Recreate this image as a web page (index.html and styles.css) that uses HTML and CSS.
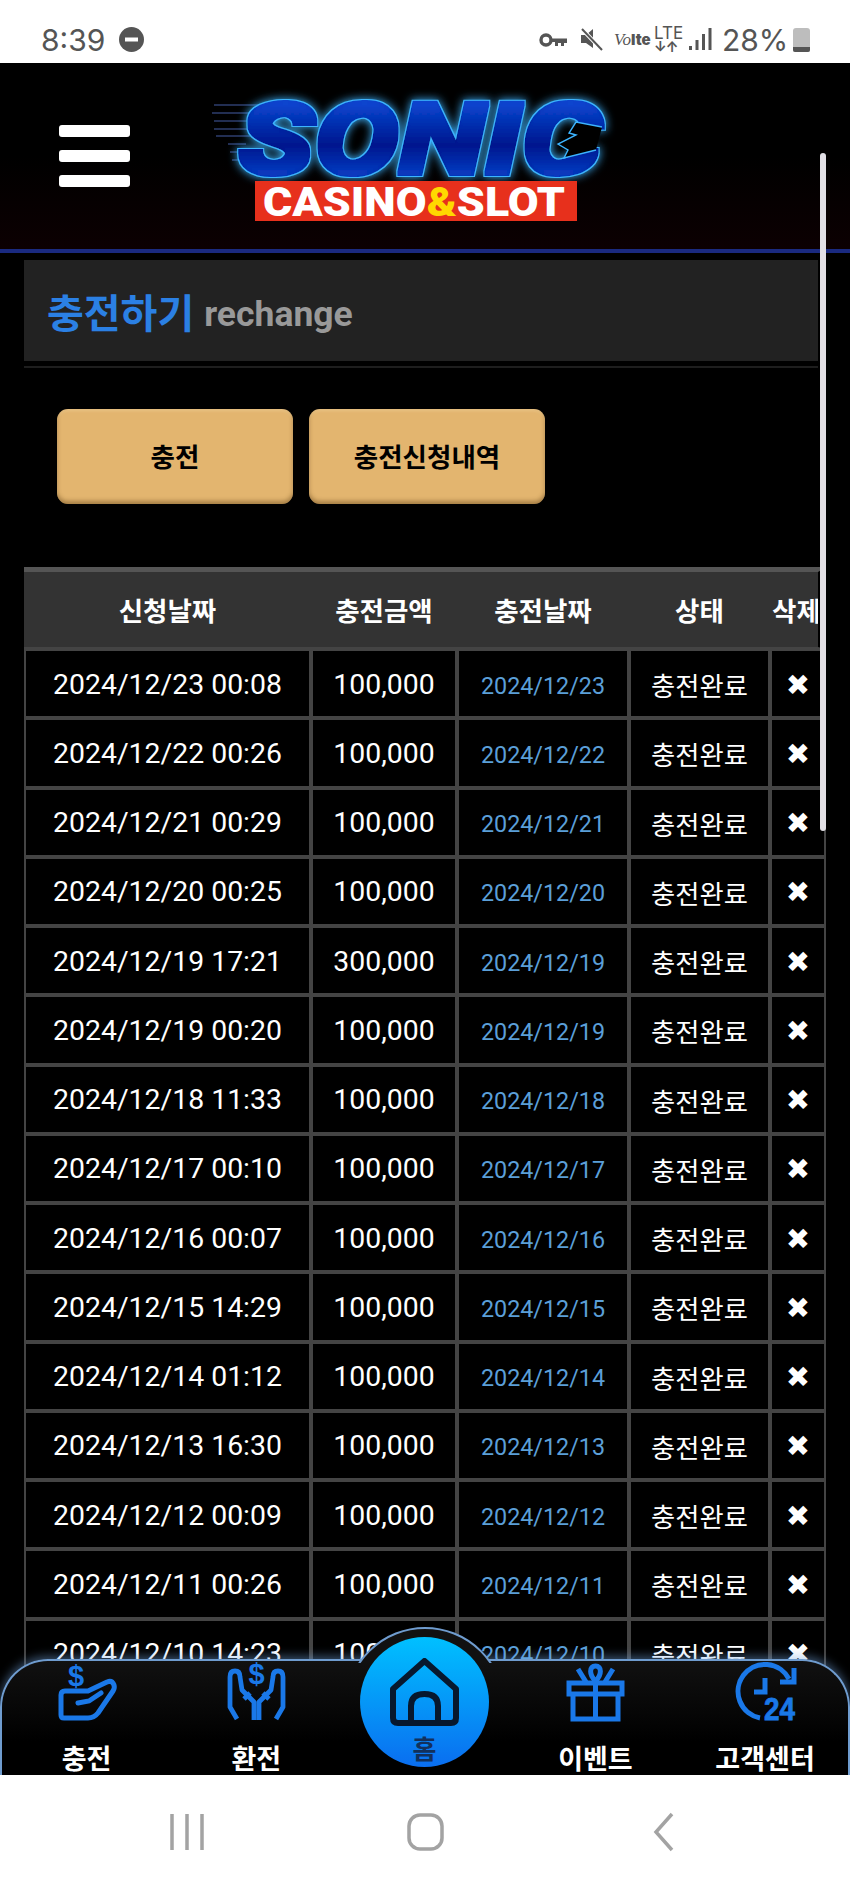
FILE: index.html
```html
<!DOCTYPE html>
<html lang="ko">

<head>
    <meta charset="UTF-8">
    <meta name="viewport" content="width=device-width, initial-scale=1.0">
    <title>충전하기</title>
    <link rel="stylesheet" href="styles.css">
</head>

<body>
    <div id="screen">
        <!-- Phone status bar -->
        <div id="statusbar">
            <span class="clock">8:39</span>
            <svg class="dnd" width="25" height="25" viewBox="0 0 25 25"><circle cx="12.5" cy="12.5" r="12.5" fill="#555"/><rect x="6" y="10.5" width="13" height="4" fill="#fff"/></svg>
            <div class="status-right">
                <svg class="st-key" width="28" height="14" viewBox="0 0 28 14"><circle cx="7" cy="7" r="5" fill="none" stroke="#555" stroke-width="3.4"/><path d="M12 5.5H28V10H25V13H22V10H19V13H16V9H12Z" fill="#555"/></svg>
                <svg class="st-mute" width="23" height="23" viewBox="0 0 23 23"><path d="M1 7H6L13 1V20L6 15H1Z" fill="#555"/><path d="M2 1L22 22" stroke="#fff" stroke-width="4"/><path d="M2 1L22 22" stroke="#555" stroke-width="2"/></svg>
                <span class="st-volte"><i>Vo</i><b>lte</b></span>
                <span class="st-lte">LTE<em>↓↑</em></span>
                <svg class="st-signal" width="23" height="23" viewBox="0 0 23 23"><rect x="0" y="18" width="3" height="4" fill="#555"/><rect x="6.500" y="12" width="3" height="10" fill="#555"/><rect x="13" y="6" width="3" height="16" fill="#555"/><rect x="19.500" y="0" width="3" height="22" fill="#555"/></svg>
                <span class="st-percent">28%</span>
                <div class="st-battery"><div class="st-battery-level"></div></div>
            </div>
        </div>

        <div id="page">
            <div id="header">
                <div class="burger">
                    <span></span>
                    <span></span>
                    <span></span>
                </div>
                <svg class="logo" width="420" height="160" viewBox="0 0 420 160">
                    <defs>
                        <linearGradient id="sonicFill" x1="0" y1="0" x2="0" y2="1">
                            <stop offset="0" stop-color="#0a5cf0"/>
                            <stop offset="0.55" stop-color="#02148a"/>
                            <stop offset="1" stop-color="#0a56e8"/>
                        </linearGradient>
                        <!-- fattens the letters and draws the neon outline round them -->
                        <filter id="neon" x="-10%" y="-30%" width="120%" height="160%">
                            <feMorphology in="SourceAlpha" operator="dilate" radius="3" result="outer"/>
                            <feFlood flood-color="#3cb4ff"/>
                            <feComposite in2="outer" operator="in" result="line"/>
                            <feMorphology in="SourceGraphic" operator="dilate" radius="1.6" result="fat"/>
                            <feGaussianBlur in="line" stdDeviation="5" result="glow"/>
                            <feMerge>
                                <feMergeNode in="glow"/>
                                <feMergeNode in="line"/>
                                <feMergeNode in="fat"/>
                            </feMerge>
                        </filter>
                    </defs>
                    <g class="speed-lines">
                        <path d="M14 25H60M12 33H56M14 41H54M14 49H52M16 56H50M28 64H46M30 72H44M32 80H42"/>
                    </g>
                    <text class="logo-sonic" x="38" y="94" textLength="364" lengthAdjust="spacingAndGlyphs" fill="url(#sonicFill)">SONIC</text>
                    <path class="logo-spikes" d="M402 47L376 42L369 53L376 55L358 64L368 70L364 78L396 70"/>
                    <rect x="55" y="101" width="322" height="40" fill="#e7301c"/>
                    <text class="logo-casino" x="63" y="136" textLength="302" lengthAdjust="spacingAndGlyphs">CASINO<tspan class="logo-amp">&amp;</tspan>SLOT</text>
                </svg>
            </div>

            <div id="title">
                <h2>충전하기</h2>
                <span>rechange</span>
            </div>
            <div class="title-rule"></div>

            <div id="buttons">
                <button class="gold-btn">충전</button>
                <button class="gold-btn">충전신청내역</button>
            </div>

            <table id="list">
                <colgroup>
                    <col class="c-date">
                    <col class="c-amount">
                    <col class="c-done">
                    <col class="c-state">
                    <col class="c-del">
                </colgroup>
                <thead>
                    <tr>
                        <th>신청날짜</th>
                        <th>충전금액</th>
                        <th>충전날짜</th>
                        <th>상태</th>
                        <th class="th-del">삭제</th>
                    </tr>
                </thead>
                <tbody>
                    <tr><td>2024/12/23 00:08</td><td>100,000</td><td class="done">2024/12/23</td><td class="state">충전완료</td><td class="del">✖</td></tr>
                    <tr><td>2024/12/22 00:26</td><td>100,000</td><td class="done">2024/12/22</td><td class="state">충전완료</td><td class="del">✖</td></tr>
                    <tr><td>2024/12/21 00:29</td><td>100,000</td><td class="done">2024/12/21</td><td class="state">충전완료</td><td class="del">✖</td></tr>
                    <tr><td>2024/12/20 00:25</td><td>100,000</td><td class="done">2024/12/20</td><td class="state">충전완료</td><td class="del">✖</td></tr>
                    <tr><td>2024/12/19 17:21</td><td>300,000</td><td class="done">2024/12/19</td><td class="state">충전완료</td><td class="del">✖</td></tr>
                    <tr><td>2024/12/19 00:20</td><td>100,000</td><td class="done">2024/12/19</td><td class="state">충전완료</td><td class="del">✖</td></tr>
                    <tr><td>2024/12/18 11:33</td><td>100,000</td><td class="done">2024/12/18</td><td class="state">충전완료</td><td class="del">✖</td></tr>
                    <tr><td>2024/12/17 00:10</td><td>100,000</td><td class="done">2024/12/17</td><td class="state">충전완료</td><td class="del">✖</td></tr>
                    <tr><td>2024/12/16 00:07</td><td>100,000</td><td class="done">2024/12/16</td><td class="state">충전완료</td><td class="del">✖</td></tr>
                    <tr><td>2024/12/15 14:29</td><td>100,000</td><td class="done">2024/12/15</td><td class="state">충전완료</td><td class="del">✖</td></tr>
                    <tr><td>2024/12/14 01:12</td><td>100,000</td><td class="done">2024/12/14</td><td class="state">충전완료</td><td class="del">✖</td></tr>
                    <tr><td>2024/12/13 16:30</td><td>100,000</td><td class="done">2024/12/13</td><td class="state">충전완료</td><td class="del">✖</td></tr>
                    <tr><td>2024/12/12 00:09</td><td>100,000</td><td class="done">2024/12/12</td><td class="state">충전완료</td><td class="del">✖</td></tr>
                    <tr><td>2024/12/11 00:26</td><td>100,000</td><td class="done">2024/12/11</td><td class="state">충전완료</td><td class="del">✖</td></tr>
                    <tr><td>2024/12/10 14:23</td><td>100,000</td><td class="done">2024/12/10</td><td class="state">충전완료</td><td class="del">✖</td></tr>
                </tbody>
            </table>

            <div id="scrollbar"></div>

            <!-- Bottom tab bar, sits over the table -->
            <div id="tabbar">
                <div class="dome"><div class="dome-circle"></div></div>
                <div class="home-btn">
                    <svg width="71" height="68" viewBox="0 0 71 68"><path d="M35.500 3L67 31V60Q67 65 62 65H9Q4 65 4 60V31Z" fill="none" stroke="#07182e" stroke-width="6" stroke-linejoin="round"/><path d="M22 63V48Q22 36 35.500 36T49 48V63" fill="none" stroke="#07182e" stroke-width="6"/></svg>
                    <span>홈</span>
                </div>
                <div class="tab">
                    <svg class="tab-icon" width="57" height="58" viewBox="0 0 57 58">
                        <text class="icon-dollar" x="18" y="23" text-anchor="middle">$</text>
                        <path d="M7 28H30L49 19Q54 17 56 22Q57 25 55 28L40 50Q36 55 30 55H6Q3 55 3 52V32Q3 28 7 28Z" fill="none" stroke="#1a78e8" stroke-width="5" stroke-linejoin="round"/>
                        <path d="M20 40L31 38L43 30" fill="none" stroke="#1a78e8" stroke-width="5" stroke-linecap="round"/>
                    </svg>
                    <span class="tab-label">충전</span>
                </div>
                <div class="tab">
                    <svg class="tab-icon" width="57" height="58" viewBox="0 0 57 58">
                        <text class="icon-dollar" x="28.500" y="21" text-anchor="middle">$</text>
                        <path d="M9 56L2 44V14Q2 8 7 8T12 14L14 27L26 39V57M48 56L55 44V14Q55 8 50 8T45 14L43 27L31 39V57" fill="none" stroke="#1a78e8" stroke-width="4.800" stroke-linejoin="round"/>
                        <path d="M16 36L22 30M41 36L35 30" fill="none" stroke="#1a78e8" stroke-width="4.800"/>
                    </svg>
                    <span class="tab-label">환전</span>
                </div>
                <div class="tab tab-home"></div>
                <div class="tab">
                    <svg class="tab-icon" width="57" height="58" viewBox="0 0 57 58">
                        <path d="M2 20H55V31H2ZM6 31V56H51V31M28.500 20V56" fill="none" stroke="#1a78e8" stroke-width="5"/>
                        <path d="M28.500 18C22 12 22 3 28.500 3S35 12 28.500 18ZM11 6L19 19M46 6L38 19" fill="none" stroke="#1a78e8" stroke-width="5"/>
                    </svg>
                    <span class="tab-label">이벤트</span>
                </div>
                <div class="tab">
                    <svg class="tab-icon" width="57" height="58" viewBox="0 0 57 58">
                        <path d="M23 55A27 27 0 1 1 52 16" fill="none" stroke="#1a78e8" stroke-width="5"/>
                        <path d="M57 5V19H43M28 15V29H17" fill="none" stroke="#1a78e8" stroke-width="5"/>
                        <text class="icon-24" x="27" y="57" textLength="31" lengthAdjust="spacingAndGlyphs">24</text>
                    </svg>
                    <span class="tab-label">고객센터</span>
                </div>
            </div>
        </div>

        <!-- Phone navigation bar -->
        <div id="phonenav">
            <div class="nav-item"><svg width="34" height="38" viewBox="0 0 34 38"><path d="M2 1V37M17 1V37M32 1V37" stroke="#a3a3a3" stroke-width="3.500"/></svg></div>
            <div class="nav-item"><svg width="37" height="38" viewBox="0 0 37 38"><rect x="2" y="2" width="33" height="34" rx="11" fill="none" stroke="#a3a3a3" stroke-width="3.500"/></svg></div>
            <div class="nav-item"><svg width="21" height="40" viewBox="0 0 21 40"><path d="M19 2L3 20L19 38" fill="none" stroke="#a3a3a3" stroke-width="3.500"/></svg></div>
        </div>
    </div>
</body>

</html>
```

FILE: styles.css
```css
body {
  margin: 0;
  background: #000;
  font-family: Roboto, "Noto Sans CJK KR", sans-serif;
}
#screen {
  width: 850px;
  height: 1889px;
  display: flex;
  flex-direction: column;
  overflow: hidden;
}
/* Status bar */
#statusbar {
  height: 63px;
  flex: none;
  background: #fff;
  color: #555;
  display: flex;
  align-items: center;
  padding: 16px 40px 0 41px;
  box-sizing: border-box;
  position: relative;
  font-family: Inter, sans-serif;
}
.clock {
  font-size: 30px;
  margin-right: 14px;
}
.status-right {
  margin-left: auto;
  display: flex;
  align-items: center;
}
.st-key {
  margin-right: 13px;
}
.st-mute {
  margin-right: 11px;
}
.st-volte {
  width: 40px;
  font-size: 17px;
  white-space: nowrap;
}
.st-volte i {
  font-family: "Liberation Serif", serif;
}
.st-volte b {
  font-size: 15px;
  font-weight: 900;
}
.st-lte {
  width: 35px;
  font-size: 17px;
  line-height: 14px;
  display: flex;
  flex-direction: column;
}
.st-lte em {
  font-style: normal;
  font-size: 14px;
  font-weight: 700;
  letter-spacing: -1px;
}
.st-signal {
  margin-right: 10px;
}
.st-percent {
  font-size: 30px;
  margin-right: 6px;
  width: 65px;
  white-space: nowrap;
}
.st-battery {
  width: 17px;
  height: 24px;
  border-radius: 3px 3px 2px 2px;
  background: #bdbdbd;
  display: flex;
  align-items: flex-end;
}
.st-battery-level {
  width: 100%;
  height: 5px;
  background: #555;
  border-radius: 0 0 2px 2px;
}
/* Page */
#page {
  flex: 1;
  position: relative;
  overflow: hidden;
  background: #000;
}
#header {
  height: 186px;
  box-sizing: content-box;
  border-bottom: 4px solid #1a2a80;
  margin-bottom: 7px;
  padding-left: 59px;
  display: flex;
  align-items: center;
  background: linear-gradient(180deg, #000 50%, #0c0002 100%);
}
.burger {
  width: 71px;
  display: flex;
  flex-direction: column;
  gap: 13px;
}
.burger span {
  height: 12px;
  background: #fff;
  border-radius: 3px;
}
.logo {
  margin-left: 70px;
  margin-top: 8px;
  flex: none;
  overflow: visible;
}
.speed-lines path {
  stroke: #4d68b8;
  stroke-width: 1.5;
  fill: none;
  opacity: 0.6;
}
.logo-sonic {
  font-family: Roboto, sans-serif;
  font-size: 100px;
  font-weight: 900;
  font-style: italic;
  filter: url(#neon);
}
.logo-spikes {
  fill: #000;
  stroke: #3cb4ff;
  stroke-width: 1.4px;
}
.logo-casino {
  font-family: Roboto, sans-serif;
  font-size: 41px;
  font-weight: 900;
  fill: #fff;
}
.logo-amp {
  fill: #ffd800;
}
/* Title panel */
#title {
  height: 101px;
  margin: 0 32px 0 24px;
  background: #222;
  display: flex;
  align-items: center;
  padding-left: 23px;
  gap: 10px;
  box-sizing: border-box;
}
#title h2 {
  margin: 0;
  font-size: 40px;
  font-weight: 700;
  color: #2b80e4;
}
#title span {
  font-size: 35.5px;
  font-weight: 700;
  color: #999;
  padding-top: 7px;
}
.title-rule {
  height: 2px;
  margin: 5px 32px 0 24px;
  background: #1e1e1e;
}
#buttons {
  display: flex;
  gap: 16px;
  padding: 41px 0 63px 57px;
}
.gold-btn {
  width: 236px;
  height: 95px;
  border: none;
  border-radius: 11px;
  background: #e3b56f;
  box-shadow: inset 0 -3px 4px rgba(90, 60, 20, 0.45), inset 0 2px 3px rgba(255, 240, 200, 0.25);
  font-family: inherit;
  font-size: 26.5px;
  font-weight: 700;
  color: #000;
  padding-bottom: 4px;
}
/* Table */
#list {
  margin-left: 24px;
  width: 802px;
  table-layout: fixed;
  border-collapse: separate;
  border-spacing: 0;
}
.c-date {
  width: 287px;
}
.c-amount {
  width: 146px;
}
.c-done {
  width: 172px;
}
.c-state {
  width: 141px;
}
.c-del {
  width: 56px;
}
#list th {
  height: 82px;
  box-sizing: border-box;
  background: #333;
  border-top: 5px solid #555;
  border-bottom: 2px solid #444;
  padding: 0 0 1px;
  font-size: 26.5px;
  font-weight: 700;
  color: #fff;
  text-align: center;
}
#list th.th-del {
  border-right: 8px solid #000;
  padding-left: 2px;
  text-align: left;
  overflow: hidden;
  white-space: nowrap;
}
#list td {
  height: 69.25px;
  box-sizing: border-box;
  background: #000;
  border: 2px solid #444;
  padding: 1px 0 0;
  font-size: 28.4px;
  color: #fff;
  text-align: center;
  white-space: nowrap;
}
#list td.done {
  font-size: 23.3px;
  color: #5b9fd8;
  padding-top: 4px;
}
#list td.state {
  font-size: 26.3px;
  padding-top: 2px;
}
#list td.del {
  font-family: "DejaVu Sans", sans-serif;
  font-size: 29px;
  padding-top: 2px;
}
#scrollbar {
  position: absolute;
  top: 90px;
  left: 820px;
  width: 6px;
  height: 678px;
  background: #e2e0e5;
  border-radius: 3px;
}
/* Bottom tabs */
#tabbar {
  position: absolute;
  left: 0;
  right: 0;
  bottom: 0;
  height: 116px;
  box-sizing: border-box;
  border: 2px solid #6f9ccf;
  border-bottom: none;
  border-radius: 48px 48px 0 0;
  background: linear-gradient(180deg, #111 0%, #000 70%);
  box-shadow: 0 -3px 10px rgba(120, 170, 230, 0.45);
  display: flex;
}
.dome {
  position: absolute;
  top: -34px;
  left: 343px;
  width: 160px;
  height: 36px;
  overflow: hidden;
}
.dome-circle {
  width: 156px;
  height: 156px;
  border: 2px solid #6f9ccf;
  border-radius: 50%;
  background: #111;
}
.home-btn {
  position: absolute;
  top: -24px;
  left: 358px;
  width: 129px;
  height: 130px;
  border-radius: 50%;
  background: linear-gradient(180deg, #00c0ff 0%, #0a6ef0 100%);
  display: flex;
  flex-direction: column;
  align-items: center;
  padding-top: 21px;
  box-sizing: border-box;
  color: #12305c;
}
.home-btn span {
  font-size: 26px;
  font-weight: 700;
  line-height: 30px;
  margin-top: 9px;
}
.tab {
  width: 170px;
  flex: none;
  display: flex;
  flex-direction: column;
  align-items: center;
  margin-left: -0.4px;
  padding-top: 2px;
}
.tab-icon {
  overflow: visible;
  margin-bottom: 25px;
}
.tab-label {
  font-size: 27px;
  font-weight: 700;
  line-height: 28px;
  color: #fff;
  white-space: nowrap;
}
.icon-dollar {
  font-family: "Liberation Sans", sans-serif;
  font-size: 29px;
  font-weight: 700;
  fill: #1a78e8;
}
.icon-24 {
  font-family: "Liberation Sans", sans-serif;
  font-size: 31px;
  font-weight: 700;
  fill: #1a78e8;
  stroke: #1a78e8;
  stroke-width: 0.8px;
}
/* Phone nav */
#phonenav {
  height: 114px;
  flex: none;
  background: #fff;
  display: flex;
  justify-content: center;
  box-sizing: border-box;
}
.nav-item {
  width: 238px;
  display: flex;
  align-items: center;
  justify-content: center;
}
```
